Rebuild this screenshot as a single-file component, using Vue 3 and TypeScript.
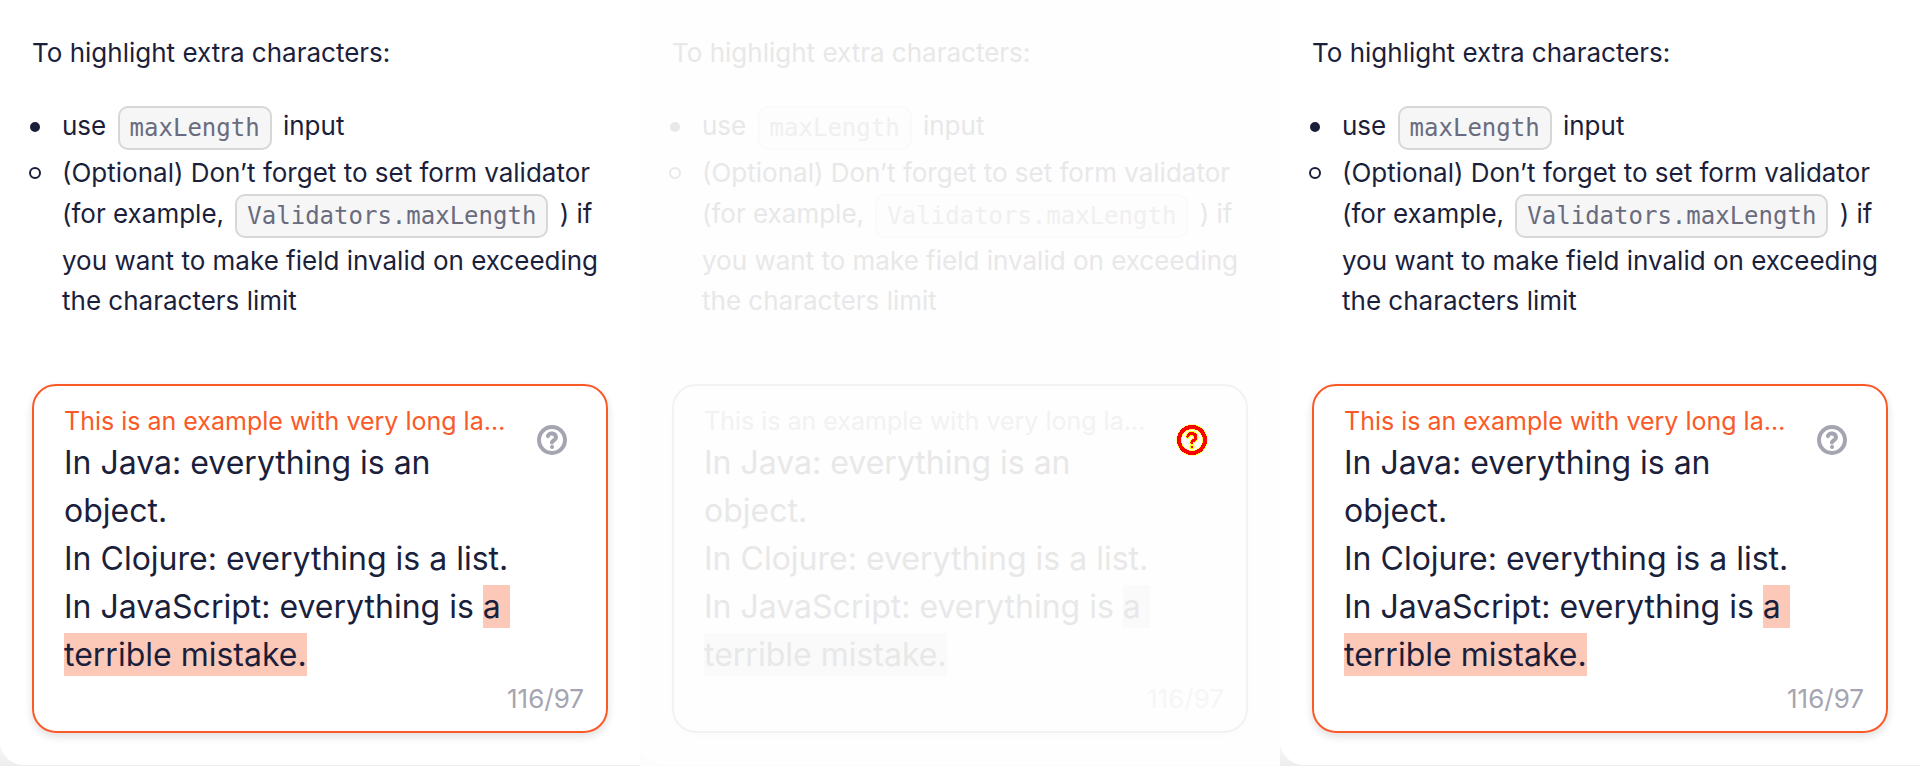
<script setup lang="ts">
import { computed, ref } from 'vue'

interface Panel {
  id: string
  tone: 'normal' | 'faded'
}

const panels: Panel[] = [
  { id: 'first', tone: 'normal' },
  { id: 'second', tone: 'faded' },
  { id: 'third', tone: 'normal' },
]

const limit = 97
const value = ref(
  'In Java: everything is an object.\nIn Clojure: everything is a list.\nIn JavaScript: everything is a terrible mistake.',
)
const allowed = computed(() => value.value.slice(0, limit))
const extra = computed(() => value.value.slice(limit))
</script>

<template>
  <main class="page">
    <section v-for="panel in panels" :key="panel.id" class="panel" :class="panel.tone">
      <div class="sheet">
        <p class="intro">To highlight extra characters:</p>
        <ul class="steps">
          <li class="step">
            <span>use <code>maxLength</code> input</span>
          </li>
          <li class="step optional">
            <span>(Optional) Don’t forget to set form validator (for example, <code>Validators.maxLength</code> ) if you want to make field invalid on exceeding the characters limit</span>
          </li>
        </ul>
        <div class="field">
          <div class="main">
            <label class="label" :for="panel.id">This is an example with very long label</label>
            <div class="editor">
              <div class="backdrop" aria-hidden="true">{{ allowed }}<mark>{{ extra }}</mark></div>
              <textarea :id="panel.id" v-model="value" rows="5" spellcheck="false"></textarea>
            </div>
          </div>
          <button class="hint" type="button" aria-label="Help">
            <svg viewBox="-16 -16 32 32" width="32" height="32" fill="none">
              <g v-if="panel.tone === 'faded'" class="halo">
                <circle r="13" />
                <path d="M-4.1-3.9a4.2 4.2 0 0 1 8.1 1.3c0 2.8-4.1 3.2-4.1 5" />
                <path d="M0 7h.1" />
              </g>
              <g class="ink">
                <circle r="13" />
                <path d="M-4.1-3.9a4.2 4.2 0 0 1 8.1 1.3c0 2.8-4.1 3.2-4.1 5" />
                <path d="M0 7h.1" />
              </g>
            </svg>
          </button>
          <output class="counter" :for="panel.id">{{ value.length }}/{{ limit }}</output>
        </div>
      </div>
    </section>
  </main>
</template>

<style>
body {
  margin: 0;
  background: #fff;
}
</style>

<style scoped>
.page {
  display: grid;
  grid-template-columns: repeat(3, 1fr);
  font-family: Inter, 'Open Sans', sans-serif;
  font-size: 26px;
  line-height: 40px;
}

.panel {
  --text: #1b1f3b;
  --code: #696c7f;
  --code-bg: #f6f6f6;
  --code-line: #d7d7d7;
  --accent: #f95a28;
  --mark: #fcc9b9;
  --muted: #a4a5b1;
  --icon: #a4a5b1;
  --sheet: #fff;
  --edge: #ededed;
  --shade: rgba(0, 0, 0, 0.12);
  min-width: 0;
  overflow: hidden;
  padding-bottom: 2px;
  color: var(--text);
  background: linear-gradient(to top, var(--edge), #fff 40px);
}

.faded {
  --text: #e8e8e8;
  --code: #f0f0f0;
  --code-bg: #fdfdfd;
  --code-line: #fafafa;
  --accent: #f2f2f2;
  --mark: #fafafa;
  --muted: #f6f6f6;
  --icon: #f00;
  --sheet: #fefefe;
  --edge: #fcfcfc;
  --shade: rgba(0, 0, 0, 0.01);
}

.sheet {
  padding: 33px 32px 32px;
  border-bottom-left-radius: 24px;
  background: var(--sheet);
}

.intro {
  margin: 0 0 32px;
}

.steps {
  margin: 0 0 63px;
  padding: 0;
  list-style: none;
}

.step {
  display: grid;
  grid-template-columns: 30px 1fr;
}

.step::before {
  content: '';
  box-sizing: border-box;
  width: 10px;
  height: 10px;
  margin: 17px 0 0 -2px;
  border: 2px solid var(--text);
  border-radius: 50%;
  background: var(--text);
}

.optional::before {
  width: 12px;
  height: 12px;
  margin: 14px 0 0 -3px;
  background: none;
}

code {
  display: inline-block;
  box-sizing: border-box;
  height: 44px;
  margin: 1px 4px 3px;
  padding: 0 10px;
  border: 2px solid var(--code-line);
  border-radius: 10px;
  color: var(--code);
  background: var(--code-bg);
  font: 24px/40px 'DejaVu Sans Mono', monospace;
  vertical-align: -1px;
}

.field {
  display: grid;
  grid-template-columns: 1fr auto;
  column-gap: 20px;
  padding: 17px 22px 12px 30px;
  border: 2px solid var(--accent);
  border-radius: 24px;
  box-shadow: 0 4px 8px var(--shade);
}

.main {
  min-width: 0;
}

.label {
  display: block;
  overflow: hidden;
  height: 36px;
  color: var(--accent);
  font-size: 25px;
  line-height: 36px;
  text-overflow: ellipsis;
  white-space: nowrap;
}

.editor {
  display: grid;
}

.backdrop,
textarea {
  grid-area: 1 / 1;
  box-sizing: border-box;
  width: 100%;
  margin: 0;
  padding: 0;
  border: 0;
  font: 32px/48px Inter, 'Open Sans', sans-serif;
  white-space: pre-wrap;
  overflow-wrap: break-word;
}

.backdrop {
  color: transparent;
}

textarea {
  overflow: hidden;
  outline: 0;
  resize: none;
  color: var(--text);
  background: transparent;
}

mark {
  padding: 2px 0;
  color: transparent;
  background: var(--mark);
}

.hint {
  align-self: start;
  margin: 21px 16px 0 0;
  padding: 0;
  border: 0;
  background: none;
  cursor: pointer;
}

.hint svg {
  display: block;
}

.ink {
  stroke: var(--icon);
  stroke-width: 4;
  stroke-linecap: round;
}

.faded .ink {
  shape-rendering: crispEdges;
}

.faded .ink path {
  stroke-width: 3;
}

.halo {
  stroke: #ff0;
  stroke-width: 5;
  stroke-linecap: round;
}

.counter {
  grid-column: 1 / -1;
  color: var(--muted);
  text-align: right;
}
</style>
